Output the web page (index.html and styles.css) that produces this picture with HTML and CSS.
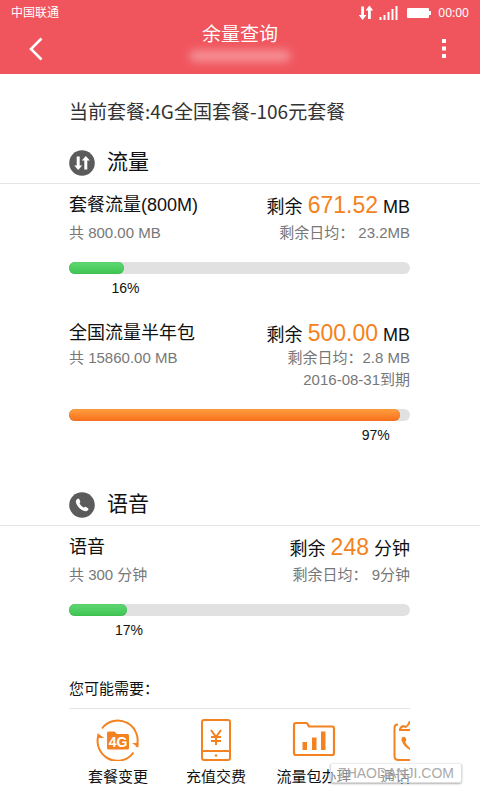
FILE: index.html
```html
<!DOCTYPE html>
<html lang="zh-CN">
<head>
    <meta charset="UTF-8">
    <meta name="viewport" content="width=device-width, initial-scale=1.0">
    <title>余量查询</title>
    <link rel="stylesheet" href="styles.css">
</head>
<body>
    <header class="header">
        <div class="status">
            <span class="carrier">中国联通</span>
            <svg class="updown" width="16" height="16" viewBox="0 0 16 16" fill="#fff">
                <path d="M3.2 1.500h2.800v8.500h2.400L4.600 15 .800 10h2.400zM10 14h2.800V5.500h2.400L11.400 .5 7.600 5.500H10z"/>
            </svg>
            <svg class="signal" width="20" height="16" viewBox="0 0 20 16" fill="#fff">
                <path d="M.5 12h2v3h-2zM4.500 10h2v5h-2zM8.500 7h2v8h-2zM12.500 4h2v11h-2zM16.500 1h2v14h-2z"/>
            </svg>
            <svg class="battery" width="25" height="10" viewBox="0 0 25 10" fill="#fff">
                <rect width="22" height="10" rx="1"/>
                <rect x="22" y="3" width="2" height="4"/>
            </svg>
            <span class="clock">00:00</span>
        </div>
        <div class="navbar">
            <button class="nav-btn" type="button" aria-label="返回">
                <svg width="16" height="24" viewBox="0 0 16 24" fill="none" stroke="#fff" stroke-width="2.6">
                    <path d="M13.500 1.500L3 12l10.500 10.500"/>
                </svg>
            </button>
            <div class="title">
                <h1>余量查询</h1>
                <div class="phone"></div>
            </div>
            <button class="nav-btn" type="button" aria-label="更多">
                <svg width="4" height="20" viewBox="0 0 4 20" fill="#fff">
                    <path d="M0 0h4v4H0zM0 7.500h4v4H0zM0 15h4v4H0z"/>
                </svg>
            </button>
        </div>
    </header>

    <main>
        <p class="plan">当前套餐:4G全国套餐-106元套餐</p>

        <section class="section">
            <h2>
                <svg width="26" height="26" viewBox="0 0 26 26">
                    <circle cx="13" cy="13" r="12.800" fill="#5b5b5b"/>
                    <path d="M7.700 6.500h3v9h2.500L9.200 20 5.200 15.500h2.500zM15.300 19.500h3v-9h2.500L16.800 6 12.800 10.500h2.500z" fill="#fff"/>
                </svg>
                <span>流量</span>
            </h2>
            <div class="item">
                <div class="row main"><span>套餐流量(800M)</span><span>剩余 <b>671.52</b> MB</span></div>
                <div class="row sub gap"><span>共 800.00 MB</span><span>剩余日均： 23.2MB</span></div>
                <div class="bar"><div class="fill green" style="width: 16%"></div></div>
                <div class="percent" style="width: 16%"><span>16%</span></div>
            </div>
            <div class="item">
                <div class="row main"><span>全国流量半年包</span><span>剩余 <b>500.00</b> MB</span></div>
                <div class="row sub"><span>共 15860.00 MB</span><span>剩余日均：2.8 MB<br>2016-08-31到期</span></div>
                <div class="bar"><div class="fill orange" style="width: 97%"></div></div>
                <div class="percent inside" style="width: 97%"><span>97%</span></div>
            </div>
        </section>

        <section class="section">
            <h2>
                <svg width="26" height="26" viewBox="0 0 26 26">
                    <circle cx="13" cy="13" r="12.800" fill="#5b5b5b"/>
                    <path d="M8 7.200C9 6.200 9.800 6.300 10.300 7.200L11.200 9.200C11.500 10 11.100 10.400 10.500 11C11.200 13 13 14.800 15 15.700C15.600 14.900 16.200 14.600 17 15L19 16.300C19.700 16.900 19.600 17.600 18.900 18.300C17.700 19.600 16 19.600 14 18.600C11 17.100 8.600 14.500 7.300 11.500C6.500 9.700 6.800 8.300 8 7.200Z" fill="#fff"/>
                </svg>
                <span>语音</span>
            </h2>
            <div class="item">
                <div class="row main"><span>语音</span><span>剩余 <b>248</b> 分钟</span></div>
                <div class="row sub gap"><span>共 300 分钟</span><span>剩余日均： 9分钟</span></div>
                <div class="bar"><div class="fill green" style="width: 17%"></div></div>
                <div class="percent" style="width: 17%"><span>17%</span></div>
            </div>
        </section>

        <section class="more">
            <h3>您可能需要：</h3>
            <nav class="links">
                <a href="#">
                    <svg width="44" height="42" viewBox="0 0 44 42">
                        <g fill="none" stroke="#f58220" stroke-width="2">
                            <path d="M6 9.500A19.800 19.800 0 0 1 40.500 28"/>
                            <path d="M37.500 33.500A19.800 19.800 0 0 1 2.500 16"/>
                        </g>
                        <path d="M1.500 14l6.500 5H1.500zM42.500 28.500L36 24h6.500z" fill="#f58220"/>
                        <path d="M11 14q0-1.500 1.500-1.500h6l2.500 2.500h10.500q1.500 0 1.500 1.500v12.500q0 1.500-1.500 1.500h-19q-1.500 0-1.500-1.500z" fill="#f58220"/>
                        <text x="22" y="27.500" class="icon-text" text-anchor="middle">4G</text>
                    </svg>
                    套餐变更
                </a>
                <a href="#">
                    <svg width="44" height="42" viewBox="0 0 44 42" fill="none" stroke="#f58220" stroke-width="2">
                        <rect x="8" y="1" width="28" height="40" rx="2"/>
                        <path d="M8 32h28M17 11l5 7 5-7M22 18v8M17 18h10M17 22h10"/>
                        <circle cx="22" cy="36.500" r="1.300" fill="#f58220" stroke="none"/>
                    </svg>
                    充值交费
                </a>
                <a href="#">
                    <svg width="44" height="42" viewBox="0 0 44 42">
                        <path d="M2 6q0-2 2-2h10q1.500 0 2 1.500l1 2h23q2 0 2 2V34q0 2-2 2H4q-2 0-2-2z" fill="none" stroke="#f58220" stroke-width="2.200"/>
                        <path d="M10.500 23h4.500v8h-4.500zM20 18.500h4.500V31H20zM29 12.500h4.500V31H29z" fill="#f58220"/>
                    </svg>
                    流量包办理
                </a>
                <a class="cut" href="#">
                    <svg width="17" height="42" viewBox="0 0 17 42">
                        <path d="M5 5.500q-3.500 0-3.500 3v28.500q0 4 4 4H17M17 11H7q0-3 3.500-4l2 1Q15 7 17 2" fill="none" stroke="#f58220" stroke-width="2"/>
                        <path d="M9.500 18q2.500-1 3.500 1.500 1 2-.800 3.500 1.500 3.500 4.800 6v2q-7-4-8.500-10-.300-2 1-3z" fill="#f58220"/>
                    </svg>
                    通话
                </a>
            </nav>
        </section>
    </main>
    <div class="watermark">ZHAODANJI.COM</div>
</body>
</html>
```

FILE: styles.css
```css
* { box-sizing: border-box; }
body { margin: 0; position: relative; background: #fff; color: #111; font-family: "Liberation Sans", "Noto Sans CJK SC", sans-serif; }
h1, h2, h3, p { margin: 0; font-weight: normal; }
svg { display: block; flex: none; }

.header { height: 74px; background: #f0555d; color: #fff; }
.status { display: flex; align-items: center; height: 26px; padding: 0 11px; font-size: 12px; line-height: 28px; }
.carrier { margin-right: auto; }
.signal { margin-left: 5px; }
.battery { margin-left: 8px; }
.clock { margin-left: 6px; font-family: "Noto Sans", sans-serif; }
.navbar { display: flex; justify-content: space-between; height: 46px; }
.nav-btn { display: flex; align-items: center; justify-content: center; width: 72px; height: 46px; padding: 0; border: none; background: none; cursor: pointer; }
.title { display: flex; flex-direction: column; align-items: center; }
h1 { height: 20px; line-height: 18px; font-size: 19px; }
.phone { width: 100px; height: 12px; margin-top: 4px; border-radius: 4px; background: #f58f95; filter: blur(4px); }

.plan { padding: 23px 70px 18px 69px; color: #333; font-family: "Noto Sans CJK SC", sans-serif; font-size: 19px; line-height: 28px; }
h2 { display: flex; align-items: center; gap: 12px; height: 41px; padding: 0 69px; border-bottom: 1px solid #e4e4e4; font-size: 21px; line-height: 24px; }
h2 span { padding-bottom: 2px; }
.section { margin-bottom: 40px; }
.item { padding: 7px 70px 0 69px; }
.item + .item { padding-top: 21px; }
.row { display: flex; justify-content: space-between; white-space: nowrap; }
.main { height: 28px; font-size: 18px; line-height: 28px; }
.main b { color: #f58220; font-size: 23px; font-weight: normal; }
.sub { color: #777; font-size: 15px; line-height: 22px; text-align: right; }
.gap { margin-top: 3px; }
.bar { height: 12px; margin-top: 18px; border-radius: 6px; background: #e1e1e1; }
.fill { height: 12px; border-radius: 6px; }
.green { background: linear-gradient(#5fd873, #3fc452); box-shadow: inset 0 0 1px #2a9a3a; }
.orange { background: linear-gradient(#ffa040, #f96f1c); box-shadow: inset 0 0 1px #b8601c; }
.percent { display: flex; justify-content: flex-end; height: 20px; margin-top: 4px; font-size: 14px; line-height: 20px; }
.percent span { margin-right: -16px; }
.percent.inside span { margin-right: 10px; }

.more { padding: 0 70px 0 69px; margin-top: -12px; }
h3 { height: 41px; border-bottom: 1px solid #e4e4e4; font-size: 15px; line-height: 42px; }
.links { display: grid; grid-template-columns: 98px 98px 98px 1fr; padding-top: 10px; }
.links a { display: flex; flex-direction: column; align-items: center; gap: 5px; color: #111; font-size: 15px; line-height: 22px; white-space: nowrap; text-decoration: none; }
.links .cut { align-items: flex-end; overflow: hidden; }
.icon-text { fill: #fff; font-size: 14px; font-weight: bold; }
.watermark { position: absolute; right: 18px; bottom: 5px; padding: 0 7px; border: 1px solid #ddd; border-top-color: #eee; border-radius: 3px; background: rgba(255, 255, 255, 0.5); box-shadow: 0 1px 2px rgba(0, 0, 0, 0.3); color: #aaa; font-size: 14px; line-height: 18px; }
```
